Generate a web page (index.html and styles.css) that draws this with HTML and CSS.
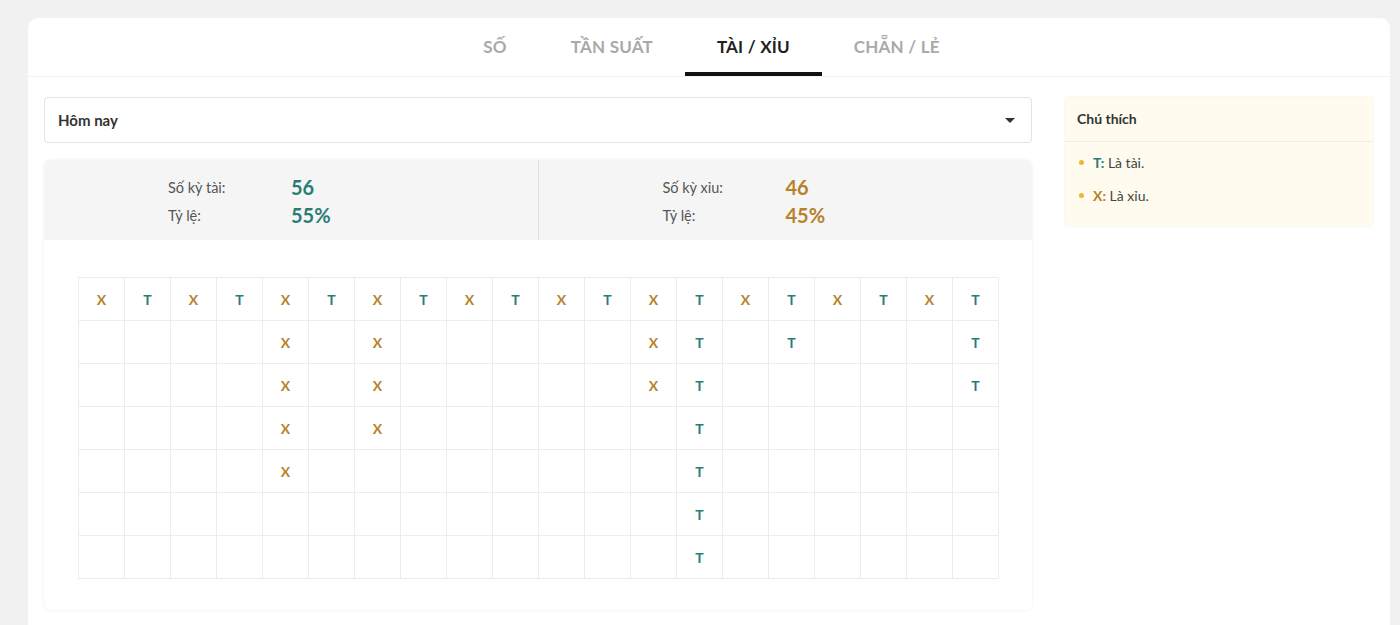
FILE: index.html
```html
<!DOCTYPE html>
<html lang="vi">
<head>
    <meta charset="UTF-8">
    <meta name="viewport" content="width=device-width, initial-scale=1.0">
    <title>Thống kê Tài / Xỉu</title>
    <link rel="stylesheet" href="styles.css">
</head>
<body>

    <div class="card">
        <div class="tabs">
            <div class="tab">SỐ</div>
            <div class="tab">TẦN SUẤT</div>
            <div class="tab active">TÀI / XỈU</div>
            <div class="tab">CHẴN / LẺ</div>
        </div>

        <div class="content">
            <div class="main-col">
                <div class="select-box">
                    <span>Hôm nay</span>
                    <span class="caret"></span>
                </div>

                <div class="result-box">
                    <div class="stats">
                        <div class="stat-half">
                            <div class="stat-row">
                                <span class="stat-label">Số kỳ tài:</span>
                                <span class="stat-value tai">56</span>
                            </div>
                            <div class="stat-row">
                                <span class="stat-label">Tỷ lệ:</span>
                                <span class="stat-value tai">55%</span>
                            </div>
                        </div>
                        <div class="stat-half">
                            <div class="stat-row">
                                <span class="stat-label">Số kỳ xỉu:</span>
                                <span class="stat-value xiu">46</span>
                            </div>
                            <div class="stat-row">
                                <span class="stat-label">Tỷ lệ:</span>
                                <span class="stat-value xiu">45%</span>
                            </div>
                        </div>
                    </div>

                    <div class="grid-wrap">
                        <table class="grid">
                            <tbody>
                                <tr>
                                    <td class="x">X</td><td class="t">T</td><td class="x">X</td><td class="t">T</td><td class="x">X</td>
                                    <td class="t">T</td><td class="x">X</td><td class="t">T</td><td class="x">X</td><td class="t">T</td>
                                    <td class="x">X</td><td class="t">T</td><td class="x">X</td><td class="t">T</td><td class="x">X</td>
                                    <td class="t">T</td><td class="x">X</td><td class="t">T</td><td class="x">X</td><td class="t">T</td>
                                </tr>
                                <tr>
                                    <td></td><td></td><td></td><td></td><td class="x">X</td>
                                    <td></td><td class="x">X</td><td></td><td></td><td></td>
                                    <td></td><td></td><td class="x">X</td><td class="t">T</td><td></td>
                                    <td class="t">T</td><td></td><td></td><td></td><td class="t">T</td>
                                </tr>
                                <tr>
                                    <td></td><td></td><td></td><td></td><td class="x">X</td>
                                    <td></td><td class="x">X</td><td></td><td></td><td></td>
                                    <td></td><td></td><td class="x">X</td><td class="t">T</td><td></td>
                                    <td></td><td></td><td></td><td></td><td class="t">T</td>
                                </tr>
                                <tr>
                                    <td></td><td></td><td></td><td></td><td class="x">X</td>
                                    <td></td><td class="x">X</td><td></td><td></td><td></td>
                                    <td></td><td></td><td></td><td class="t">T</td><td></td>
                                    <td></td><td></td><td></td><td></td><td></td>
                                </tr>
                                <tr>
                                    <td></td><td></td><td></td><td></td><td class="x">X</td>
                                    <td></td><td></td><td></td><td></td><td></td>
                                    <td></td><td></td><td></td><td class="t">T</td><td></td>
                                    <td></td><td></td><td></td><td></td><td></td>
                                </tr>
                                <tr>
                                    <td></td><td></td><td></td><td></td><td></td>
                                    <td></td><td></td><td></td><td></td><td></td>
                                    <td></td><td></td><td></td><td class="t">T</td><td></td>
                                    <td></td><td></td><td></td><td></td><td></td>
                                </tr>
                                <tr>
                                    <td></td><td></td><td></td><td></td><td></td>
                                    <td></td><td></td><td></td><td></td><td></td>
                                    <td></td><td></td><td></td><td class="t">T</td><td></td>
                                    <td></td><td></td><td></td><td></td><td></td>
                                </tr>
                            </tbody>
                        </table>
                    </div>
                </div>
            </div>

            <div class="side-col">
                <div class="legend">
                    <div class="legend-header">Chú thích</div>
                    <ul class="legend-list">
                        <li><b class="tai">T:</b> Là tài.</li>
                        <li><b class="xiu">X:</b> Là xỉu.</li>
                    </ul>
                </div>
            </div>
        </div>
    </div>

</body>
</html>
```

FILE: styles.css
```css
body {
    margin: 0;
    background-color: #f1f1f1;
    font-family: Lato, "Open Sans", sans-serif;
    color: #333;
}

.card {
    margin: 18px 0 0 28px;
    width: 1362px;
    height: 620px;
    background-color: white;
    border-radius: 10px 10px 0 0;
}

/* Thanh tab */
.tabs {
    display: flex;
    justify-content: center;
    height: 59px;
    padding-left: 5px;
    border-bottom: 1px solid #f3f3f3;
    box-sizing: border-box;
}

.tab {
    padding: 3px 32px 0;
    line-height: 51px;
    font-size: 17px;
    font-weight: 700;
    color: #a9a9a9;
    border-bottom: 4px solid transparent;
    letter-spacing: 0.2px;
}

.tab.active {
    color: #222;
    border-bottom-color: #111;
}

.content {
    display: flex;
    gap: 33px;
    padding: 20px 17px 0 16px;
}

.main-col {
    width: 988px;
}

.side-col {
    width: 308px;
}

.select-box {
    display: flex;
    justify-content: space-between;
    align-items: center;
    height: 46px;
    box-sizing: border-box;
    border: 1px solid #e3e3e3;
    border-radius: 4px;
    padding: 0 16px 0 13px;
    font-size: 15px;
    font-weight: 700;
    color: #333;
}

.caret {
    width: 0;
    height: 0;
    border-left: 5px solid transparent;
    border-right: 5px solid transparent;
    border-top: 5px solid #333;
}

.result-box {
    margin-top: 17px;
    border-radius: 6px;
    box-shadow: 0 0 3px rgba(0, 0, 0, 0.08);
    height: 450px;
}

.stats {
    display: flex;
    height: 80px;
    background-color: #f5f5f5;
    border-radius: 6px 6px 0 0;
}

.stat-half {
    flex: 1;
    padding: 13px 0 0 124px;
    box-sizing: border-box;
}

.stat-half + .stat-half {
    border-left: 1px solid #e0e0e0;
}

.stat-row {
    display: flex;
    align-items: center;
    height: 28px;
}

.stat-label {
    width: 123px;
    font-size: 14.5px;
    color: #555;
}

.stat-value {
    font-size: 20px;
    font-weight: 700;
}

.tai {
    color: #2a7d74;
}

.xiu {
    color: #b6822c;
}

.grid-wrap {
    padding: 37px 33px 0 34px;
}

.grid {
    width: 100%;
    table-layout: fixed;
    border-collapse: collapse;
}

.grid td {
    height: 42px;
    border: 1px solid #ececec;
    text-align: center;
    font-size: 14px;
    font-weight: 700;
    padding: 0;
}

.grid td.x {
    color: #b6822c;
}

.grid td.t {
    color: #2a7d74;
}

/* Chú thích */
.legend {
    background-color: #fffcef;
    border-radius: 4px;
    box-shadow: 0 0 3px rgba(0, 0, 0, 0.08);
    height: 129px;
}

.legend-header {
    height: 44px;
    line-height: 44px;
    padding-left: 12px;
    font-size: 14px;
    font-weight: 700;
    color: #333;
    border-bottom: 1px solid #f1ede0;
}

.legend-list {
    list-style: none;
    margin: 0;
    padding: 4px 0 0 14px;
}

.legend-list li {
    position: relative;
    padding-left: 14px;
    font-size: 14px;
    color: #444;
    line-height: 33px;
}

.legend-list li::before {
    content: "";
    position: absolute;
    left: 0;
    top: 14px;
    width: 5px;
    height: 5px;
    border-radius: 50%;
    background-color: #f0b43a;
}
```
